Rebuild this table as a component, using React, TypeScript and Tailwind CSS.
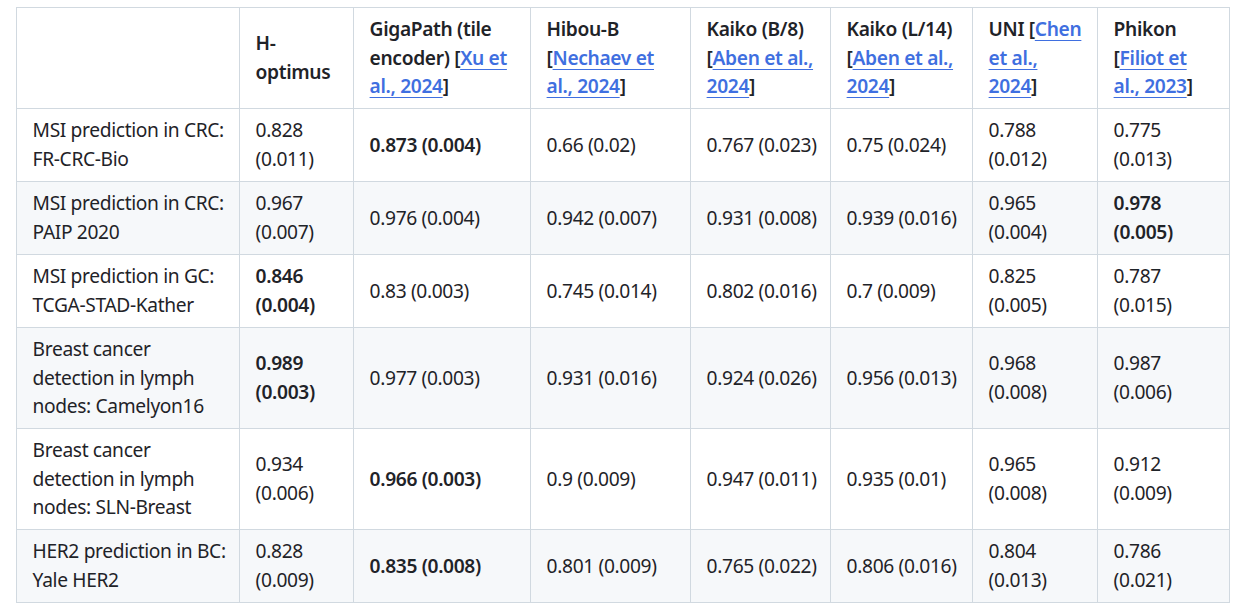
import React from 'react';

type Cell = string;

// '*' prefix marks the best score in a row (bold)
const rows: { h: string; cells: Cell[] }[] = [
  {
    h: 'h-[73px]',
    cells: ['MSI prediction in CRC:\nFR-CRC-Bio', '0.828\n(0.011)', '*0.873 (0.004)', '0.66 (0.02)', '0.767 (0.023)', '0.75 (0.024)', '0.788\n(0.012)', '0.775\n(0.013)'],
  },
  {
    h: 'h-[73px]',
    cells: ['MSI prediction in CRC:\nPAIP 2020', '0.967\n(0.007)', '0.976 (0.004)', '0.942 (0.007)', '0.931 (0.008)', '0.939 (0.016)', '0.965\n(0.004)', '*0.978\n(0.005)'],
  },
  {
    h: 'h-[73px]',
    cells: ['MSI prediction in GC:\nTCGA-STAD-Kather', '*0.846\n(0.004)', '0.83 (0.003)', '0.745 (0.014)', '0.802 (0.016)', '0.7 (0.009)', '0.825\n(0.005)', '0.787\n(0.015)'],
  },
  {
    h: 'h-[101px]',
    cells: ['Breast cancer\ndetection in lymph\nnodes: Camelyon16', '*0.989\n(0.003)', '0.977 (0.003)', '0.931 (0.016)', '0.924 (0.026)', '0.956 (0.013)', '0.968\n(0.008)', '0.987\n(0.006)'],
  },
  {
    h: 'h-[101px]',
    cells: ['Breast cancer\ndetection in lymph\nnodes: SLN-Breast', '0.934\n(0.006)', '*0.966 (0.003)', '0.9 (0.009)', '0.947 (0.011)', '0.935 (0.01)', '0.965\n(0.008)', '0.912\n(0.009)'],
  },
  {
    h: 'h-[73px]',
    cells: ['HER2 prediction in BC:\nYale HER2', '0.828\n(0.009)', '*0.835 (0.008)', '0.801 (0.009)', '0.765 (0.022)', '0.806 (0.016)', '0.804\n(0.013)', '0.786\n(0.021)'],
  },
];

const Ref = ({ children }: { children: React.ReactNode }) => (
  <a href="#" className="text-[#3f6fe0] underline underline-offset-[3.8px] decoration-1">
    {children}
  </a>
);

const cellCls = 'border border-[#d1d9e0] px-[15.6px] py-[6.8px] align-middle whitespace-pre';
const thCls = `${cellCls} text-left font-semibold`;

const App = () => {
  return (
    <div className="min-h-screen bg-white pt-[7px] pl-[16px] font-['Noto_Sans','Segoe_UI',sans-serif] text-[19.2px] leading-[28.8px] tracking-[-0.35px] text-[#1f2328]">
      <table className="table-fixed border-collapse w-[1213px]">
        <colgroup>
          <col className="w-[223px]" />
          <col className="w-[114px]" />
          <col className="w-[177px]" />
          <col className="w-[160px]" />
          <col className="w-[140px]" />
          <col className="w-[142px]" />
          <col className="w-[125px]" />
          <col className="w-[132px]" />
        </colgroup>
        <thead>
          <tr className="h-[101px] bg-white">
            <th className={cellCls}></th>
            <th className={thCls}>
              H-<br />optimus
            </th>
            <th className={thCls}>
              GigaPath (tile<br />encoder) [<Ref>Xu et<br />al., 2024</Ref>]
            </th>
            <th className={thCls}>
              Hibou-B<br />[<Ref>Nechaev et<br />al., 2024</Ref>]
            </th>
            <th className={thCls}>
              Kaiko (B/8)<br />[<Ref>Aben et al.,<br />2024</Ref>]
            </th>
            <th className={thCls}>
              Kaiko (L/14)<br />[<Ref>Aben et al.,<br />2024</Ref>]
            </th>
            <th className={thCls}>
              UNI [<Ref>Chen<br />et al.,<br />2024</Ref>]
            </th>
            <th className={thCls}>
              Phikon<br />[<Ref>Filiot et<br />al., 2023</Ref>]
            </th>
          </tr>
        </thead>
        <tbody>
          {rows.map((r, i) => (
            <tr key={i} className={`${r.h} ${i % 2 === 1 ? 'bg-[#f6f8fa]' : 'bg-white'}`}>
              {r.cells.map((c, j) => {
                const bold = c.startsWith('*');
                return (
                  <td key={j} className={`${cellCls} ${bold ? 'font-semibold' : ''}`}>
                    {bold ? c.slice(1) : c}
                  </td>
                );
              })}
            </tr>
          ))}
        </tbody>
      </table>
    </div>
  );
};

export default App;
